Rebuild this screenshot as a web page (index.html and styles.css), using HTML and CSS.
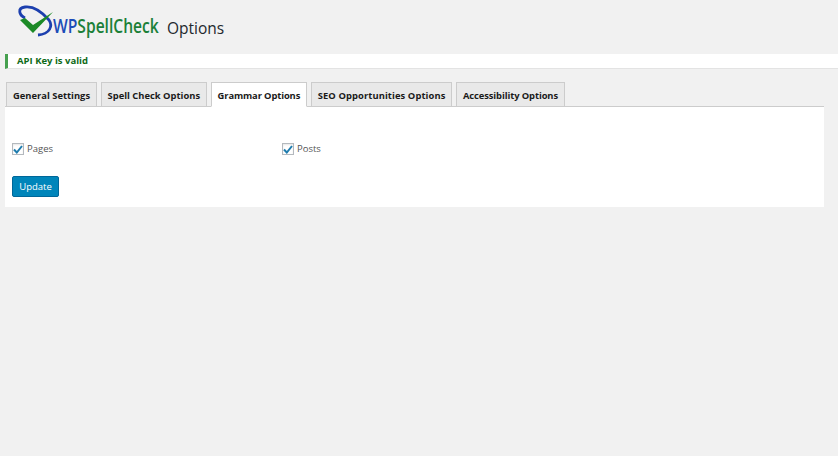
FILE: index.html
```html
<!DOCTYPE html>
<html lang="en">
<head>
<meta charset="utf-8">
<title>WP SpellCheck Options</title>
<link rel="stylesheet" href="styles.css">
</head>
<body>
<header class="head">
  <svg class="mark" width="35" height="36" viewBox="0 0 35 36" aria-hidden="true">
    <path d="M7 15C1 12 -1 5 7 4C15 3 24 9 31 17C35 23 32 31 20 32" fill="none" stroke="#1c3fae" stroke-width="2.800"/>
    <path d="M2 17L7 15L15 22L35 9L15 30Z" fill="#1c8a26"/>
  </svg>
  <div class="brand"><span class="brand-text"><span class="wp">WP</span><span class="sc">SpellCheck</span></span></div>
  <h1 class="title">Options</h1>
</header>
<div class="notice"><p>API Key is valid</p></div>
<nav class="tabs">
  <a class="tab">General Settings</a>
  <a class="tab">Spell Check Options</a>
  <a class="tab active">Grammar Options</a>
  <a class="tab tab-wide">SEO Opportunities Options</a>
  <a class="tab tab-tight">Accessibility Options</a>
</nav>
<main class="panel">
  <div class="checks">
    <label class="check"><span class="box"><svg width="10" height="9" viewBox="0 0 10 9"><path d="M1 4.500L3.800 7.500L9 1" fill="none" stroke="#1e7cae" stroke-width="2"/></svg></span>Pages</label>
    <label class="check"><span class="box"><svg width="10" height="9" viewBox="0 0 10 9"><path d="M1 4.500L3.800 7.500L9 1" fill="none" stroke="#1e7cae" stroke-width="2"/></svg></span>Posts</label>
  </div>
  <button class="update">Update</button>
</main>
</body>
</html>
```
FILE: styles.css
```css
* { box-sizing: border-box; }
html, body { margin: 0; height: 100%; }
body {
  background: #f1f1f1;
  font-family: "Open Sans", "Liberation Sans", sans-serif;
  color: #444;
  overflow: hidden;
  padding-left: 5px;
}
.head {
  height: 54px;
  display: flex;
  align-items: flex-start;
  padding: 3px 0 0 13px;
}
.mark { flex: none; overflow: visible; }
.brand {
  width: 114px;
  flex: none;
  margin-top: 13px;
}
.brand-text {
  display: inline-block;
  font-family: "Open Sans", sans-serif;
  font-size: 20px;
  font-weight: 600;
  line-height: 20px;
  white-space: nowrap;
  transform: scaleX(.78);
  transform-origin: left center;
}
.wp { color: #1c4cb8; }
.sc { color: #1b8038; }
.title {
  margin: 14px 0 0 0;
  font-size: 15.500px;
  line-height: 22px;
  font-weight: 400;
  color: #23282d;
}
.notice {
  height: 15px;
  background: #fff;
  border-left: 3px solid #46a04f;
  border-bottom: 1px solid #e3e3e3;
}
.notice p {
  margin: 0;
  padding-left: 9px;
  font-size: 9.500px;
  line-height: 14px;
  font-weight: 700;
  color: #0f6a17;
}
.tabs {
  display: flex;
  gap: 3.500px;
  margin-top: 13px;
  height: 25px;
  width: 819px;
  padding-left: 1px;
  border-bottom: 1px solid #ccc;
}
.tab {
  height: 25px;
  padding: 0 6px;
  background: #e9e9e9;
  border: 1px solid #ccc;
  font-size: 9.400px;
  line-height: 26px;
  font-weight: 700;
  color: #1a1a1a;
  white-space: nowrap;
}
.tab-wide { letter-spacing: .09px; }
.tab-tight { letter-spacing: -.1px; }
.active {
  background: #fff;
  border-bottom-color: #fff;
  letter-spacing: -.12px;
}
.panel {
  width: 819px;
  height: 100px;
  background: #fff;
  padding: 35px 7px 0 7px;
}
.checks { display: flex; }
.check {
  width: 270px;
  display: flex;
  align-items: center;
  font-size: 9.500px;
  line-height: 14px;
  color: #555;
}
.box {
  width: 12px;
  height: 12px;
  margin-right: 3px;
  border: 1px solid #b4b9be;
  background: #fff;
  display: flex;
  align-items: center;
  justify-content: center;
  box-shadow: inset 0 1px 2px rgba(0,0,0,.1);
}
.update {
  display: block;
  margin-top: 20px;
  width: 47px;
  height: 21px;
  padding: 0;
  border: 1px solid #006799;
  border-radius: 2px;
  background: #0085ba;
  color: #fff;
  font-family: inherit;
  font-size: 9.500px;
  font-weight: 400;
}
```
